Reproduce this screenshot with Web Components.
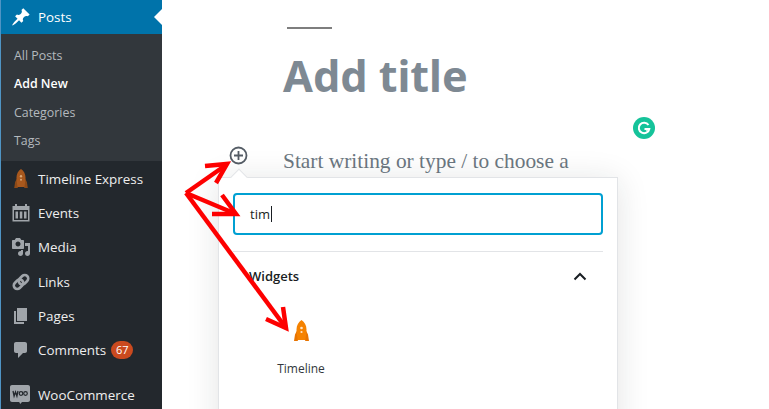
<!DOCTYPE html>
<html>
<head>
<meta charset="utf-8">
<title>Add New Post</title>
<style>
	html, body { margin: 0; height: 100%; overflow: hidden; background: #fff; }
	body { font-family: "Open Sans", "Noto Sans", sans-serif; position: relative; width: 769px; height: 409px; }
	app-shell { height: 409px; }
	svg { display: block; }
</style>
</head>
<body>
<app-shell>
	<wp-sidebar slot="side">
		<wp-menu-item active>
			<svg slot="icon" width="20" height="20" viewBox="0 0 20 20"><path fill="#fff" d="M10.440 3.020l1.820-1.820 6.360 6.350-1.830 1.820c-1.050-.68-2.480-.57-3.410.36l-.75.75c-.92.930-1.040 2.350-.35 3.410l-1.830 1.820-2.410-2.410-2.800 2.790c-.42.420-3.380 2.710-3.800 2.290s1.860-3.390 2.280-3.810l2.790-2.790L4.100 9.360l1.830-1.820c1.050.690 2.480.570 3.400-.36l.75-.75c.930-.920 1.050-2.350.360-3.410z"/></svg>
			Posts
		</wp-menu-item>
		<wp-submenu>
			<wp-sub-item>All Posts</wp-sub-item>
			<wp-sub-item current>Add New</wp-sub-item>
			<wp-sub-item>Categories</wp-sub-item>
			<wp-sub-item>Tags</wp-sub-item>
		</wp-submenu>
		<wp-menu-item>
			<rocket-icon slot="icon" tone="dim"></rocket-icon>
			Timeline Express
		</wp-menu-item>
		<wp-menu-item>
			<svg slot="icon" width="20" height="20" viewBox="0 0 20 20"><path fill="#a0a5aa" fill-rule="evenodd" d="M4 1h2v2h8V1h2v2h2.500v15.500H1.500V3H4zM3 7v10h14V7zM4.500 8.500h2.500V15.500H4.500zm4.300 0h2.500v7H8.800zm4.200 0h2.500v7H13z"/></svg>
			Events
		</wp-menu-item>
		<wp-menu-item>
			<svg slot="icon" width="20" height="20" viewBox="0 0 20 20"><path fill="#a0a5aa" d="M13 11V4c0-.55-.45-1-1-1h-1.670L9 1H5L3.670 3H2c-.55 0-1 .45-1 1v7c0 .55.45 1 1 1h10c.55 0 1-.45 1-1zM7 4.500c1.380 0 2.500 1.120 2.500 2.500S8.380 9.500 7 9.500 4.500 8.380 4.500 7 5.620 4.500 7 4.500zM14 6h5v10.500c0 1.380-1.120 2.500-2.500 2.500S14 17.880 14 16.500s1.120-2.500 2.500-2.500c.17 0 .34.020.5.050V9h-3V6zm-4 8.050V13h2v3.500c0 1.380-1.120 2.500-2.500 2.500S7 17.880 7 16.500 8.120 14 9.500 14c.17 0 .34.020.5.050z"/></svg>
			Media
		</wp-menu-item>
		<wp-menu-item>
			<svg slot="icon" width="20" height="20" viewBox="0 0 20 20"><g fill="none" stroke="#a0a5aa" stroke-width="2.600"><rect x="9" y="2.500" width="7" height="10.500" rx="3.500" transform="rotate(45 12.500 7.750)"/><rect x="4" y="7" width="7" height="10.500" rx="3.500" transform="rotate(45 7.500 12.250)"/></g></svg>
			Links
		</wp-menu-item>
		<wp-menu-item>
			<svg slot="icon" width="20" height="20" viewBox="0 0 20 20"><path fill="#a0a5aa" d="M6 15V2h10v13H6zm-1 1h8v2H3V5h2v11z"/></svg>
			Pages
		</wp-menu-item>
		<wp-menu-item>
			<svg slot="icon" width="20" height="20" viewBox="0 0 20 20"><path fill="#a0a5aa" d="M5 2h9c1.100 0 2 .9 2 2v7c0 1.100-.9 2-2 2h-2l-5 5v-5H5c-1.100 0-2-.9-2-2V4c0-1.100.9-2 2-2z"/></svg>
			Comments
			<count-badge slot="badge">67</count-badge>
		</wp-menu-item>
		<wp-menu-item woo>
			<svg slot="icon" width="20" height="20" viewBox="0 0 20 20"><path fill="#a0a5aa" d="M2 0h16c1.100 0 2 .9 2 2v13c0 1.100-.9 2-2 2h-6l-1.800 2-1-2H2c-1.100 0-2-.9-2-2V2C0 .9.900 0 2 0z"/><path fill="none" stroke="#23282d" stroke-width="1.300" d="M3 6l1.100 5 1.400-4 1.400 4L8 6"/><circle cx="11" cy="8.500" r="1.800" fill="none" stroke="#23282d" stroke-width="1.200"/><circle cx="15.500" cy="8.500" r="1.800" fill="none" stroke="#23282d" stroke-width="1.200"/></svg>
			WooCommerce
		</wp-menu-item>
	</wp-sidebar>
	<editor-canvas slot="main">
		<inserter-popover></inserter-popover>
	</editor-canvas>
</app-shell>
<red-arrows></red-arrows>

<script>
	class AppShell extends HTMLElement {
		constructor() {
			super();
			this.attachShadow({ mode: 'open' });
			this.shadowRoot.innerHTML = `
				<style>
					:host { display: grid; grid-template-columns: 162px 1fr; overflow: hidden; }
				</style>
				<slot name="side"></slot>
				<slot name="main"></slot>
			`;
		}
	}

	class WpSidebar extends HTMLElement {
		constructor() {
			super();
			this.attachShadow({ mode: 'open' });
			this.shadowRoot.innerHTML = `
				<style>
					:host {
						display: flex;
						flex-direction: column;
						height: 409px;
						overflow: hidden;
						background: #23282d;
						box-shadow: inset 1px 0 0 #4f94c4;
					}
				</style>
				<slot></slot>
			`;
		}
	}

	class WpMenuItem extends HTMLElement {
		constructor() {
			super();
			this.attachShadow({ mode: 'open' });
			this.shadowRoot.innerHTML = `
				<style>
					:host {
						display: flex;
						align-items: center;
						height: 34.3px;
						padding-left: 11px;
						gap: 7px;
						color: #eee;
						font-size: 13.4px;
						position: relative;
						flex: none;
					}
					:host([active]) { background: #0073aa; color: #fff; height: 34px; box-shadow: inset 1px 0 0 #4f94c4; }
					:host([active])::after {
						content: "";
						position: absolute;
						right: 0;
						top: 9px;
						border: 8px solid transparent;
						border-right-color: #fff;
						border-left-width: 0;
					}
					:host([woo]) { margin-top: 11px; padding-left: 10px; gap: 8px; }
					.icon { width: 20px; height: 20px; flex: none; }
					.badge { margin-left: -2px; display: flex; }
				</style>
				<span class="icon"><slot name="icon"></slot></span>
				<span><slot></slot></span>
				<span class="badge"><slot name="badge"></slot></span>
			`;
		}
	}

	class WpSubmenu extends HTMLElement {
		constructor() {
			super();
			this.attachShadow({ mode: 'open' });
			this.shadowRoot.innerHTML = `
				<style>
					:host {
						display: flex;
						flex-direction: column;
						flex: none;
						height: 127px;
						margin-bottom: .5px;
						padding-top: 7.200px;
						box-sizing: border-box;
						background: #32373c;
						box-shadow: inset 1px 0 0 #4f94c4;
					}
				</style>
				<slot></slot>
			`;
		}
	}

	class WpSubItem extends HTMLElement {
		constructor() {
			super();
			this.attachShadow({ mode: 'open' });
			this.shadowRoot.innerHTML = `
				<style>
					:host {
						display: flex;
						align-items: center;
						height: 28.400px;
						padding-left: 14px;
						font-size: 12.400px;
						color: #b4b9be;
					}
					:host([current]) { color: #fff; font-weight: 600; }
				</style>
				<slot></slot>
			`;
		}
	}

	class CountBadge extends HTMLElement {
		constructor() {
			super();
			this.attachShadow({ mode: 'open' });
			this.shadowRoot.innerHTML = `
				<style>
					:host {
						display: block;
						min-width: 22px;
						height: 18px;
						line-height: 18px;
						text-align: center;
						border-radius: 9px;
						background: #ca4a1f;
						color: #fff;
						font-size: 11px;
					}
				</style>
				<slot></slot>
			`;
		}
	}

	class RocketIcon extends HTMLElement {
		constructor() {
			super();
			this.attachShadow({ mode: 'open' });
			const dim = this.getAttribute('tone') === 'dim';
			const body = dim ? '#a8581d' : '#f58200';
			const fin = dim ? '#8c4a18' : '#e87400';
			const hole = dim ? '#d8a878' : '#ffe6c8';
			const w = dim ? 14 : 15;
			const h = dim ? 19 : 21;
			this.shadowRoot.innerHTML = `
				<style>:host { display: block; } svg { display: block; margin: auto; }</style>
				<svg width="${w}" height="${h}" viewBox="0 0 15 21">
					<path fill="${fin}" d="M3 10.500L1 14.500 0 21h3.500l1-1.500h6l1 1.500H15l-1-6.500-2-4z"/>
					<path fill="${body}" d="M7.500 0C10.500 2 12.500 5.500 12.500 9.500c0 3.500-.6 7-1.200 10.500H3.700C3.100 16.500 2.500 13 2.500 9.500 2.500 5.500 4.500 2 7.500 0z"/>
					<circle cx="7.500" cy="8" r="1.300" fill="${hole}"/>
					<circle cx="7.500" cy="12" r="1.100" fill="${hole}"/>
				</svg>
			`;
		}
	}

	class EditorCanvas extends HTMLElement {
		constructor() {
			super();
			this.attachShadow({ mode: 'open' });
			this.shadowRoot.innerHTML = `
				<style>
					:host {
						display: block;
						height: 409px;
						overflow: hidden;
						position: relative;
						background: #fff;
					}
					.rule { width: 45px; height: 2px; background: #7e7e7e; margin: 27px 0 0 125px; }
					h1 {
						margin: 13px 0 0 121px;
						font: 700 43.200px/68px "Noto Sans", "Open Sans", sans-serif;
						color: #7e8993;
					}
					.block { display: flex; align-items: center; margin: 37px 0 0 67px; height: 28px; gap: 35px; }
					.plus { width: 19px; height: 19px; flex: none; margin-top: -12px; }
					p {
						margin: 0;
						font: 21.400px/28px "Liberation Serif", serif;
						color: #6c7781;
						white-space: nowrap;
					}
					.grammarly {
						position: absolute;
						left: 471px;
						top: 117px;
						width: 22px;
						height: 22px;
					}
				</style>
				<div class="rule"></div>
				<h1>Add title</h1>
				<div class="block">
					<svg class="plus" viewBox="0 0 19 19">
						<circle cx="9.500" cy="9.500" r="8" fill="none" stroke="#555d66" stroke-width="1.800"/>
						<path d="M5 9.500h9M9.500 5v9" stroke="#555d66" stroke-width="1.800" fill="none"/>
					</svg>
					<p>Start writing or type / to choose a</p>
				</div>
				<svg class="grammarly" viewBox="0 0 22 22">
					<circle cx="11" cy="11" r="11" fill="#15c39a"/>
					<path d="M15.500 8a5.300 5.300 0 1 0 .8 4H11.500" fill="none" stroke="#fff" stroke-width="2"/>
					<path d="M11.500 12l3 2.500v-2.500z" fill="#fff"/>
				</svg>
				<slot></slot>
			`;
		}
	}

	class InserterPopover extends HTMLElement {
		constructor() {
			super();
			this.attachShadow({ mode: 'open' });
			this.shadowRoot.innerHTML = `
				<style>
					:host {
						position: absolute;
						left: 56px;
						top: 177px;
						width: 400px;
						height: 260px;
						box-sizing: border-box;
						background: #fff;
						border: 1px solid #e2e4e7;
						box-shadow: 0 3px 30px rgba(25, 30, 35, .12);
						padding: 15px 14px 0;
						font-family: "Open Sans", "Noto Sans", sans-serif;
						color: #191e23;
					}
					:host::before {
						content: "";
						position: absolute;
						left: 14px;
						top: -7px;
						width: 11px;
						height: 11px;
						background: #fff;
						border: 1px solid #e2e4e7;
						border-width: 1px 0 0 1px;
						transform: rotate(45deg);
					}
					.search {
						height: 42px;
						box-sizing: border-box;
						border: 2px solid #00a0d2;
						border-radius: 4px;
						display: flex;
						align-items: center;
						padding-left: 15px;
						font-size: 13px;
					}
					.caret { width: 1px; height: 16px; background: #191e23; margin-left: 1px; }
					hr { border: 0; border-top: 1px solid #e2e4e7; margin: 16px 0 0; }
					.head {
						display: flex;
						align-items: center;
						justify-content: space-between;
						height: 48px;
						padding: 0 16px;
						font-size: 13px;
						font-weight: 600;
					}
					.item {
						width: 104px;
						margin: 20px 0 0 16px;
						display: flex;
						flex-direction: column;
						align-items: center;
						font-size: 12px;
						color: #32373c;
					}
					.item rocket-icon { width: 15px; height: 21px; }
					.item span { margin-top: 19px; }
				</style>
				<div class="search"><span>tim</span><span class="caret"></span></div>
				<hr>
				<div class="head">
					<span>Widgets</span>
					<svg width="14" height="9" viewBox="0 0 14 9"><path d="M1.500 7.500L7 2l5.500 5.500" fill="none" stroke="#191e23" stroke-width="2"/></svg>
				</div>
				<div class="item"><rocket-icon></rocket-icon><span>Timeline</span></div>
			`;
		}
	}

	class RedArrows extends HTMLElement {
		constructor() {
			super();
			this.attachShadow({ mode: 'open' });
			this.shadowRoot.innerHTML = `
				<style>
					:host { position: absolute; left: 0; top: 0; width: 769px; height: 409px; pointer-events: none; }
				</style>
				<svg width="769" height="409" viewBox="0 0 769 409" style="display:block">
					<g fill="none" stroke="#fd0000" stroke-width="4.500" stroke-linejoin="miter">
						<path d="M186 193L226 165"/>
						<path d="M205 166L227 164L216 183"/>
						<path d="M186 193L236 214"/>
						<path d="M222 195L236 214L212 214"/>
						<path d="M186 193L286 328"/>
						<path d="M283 307L286 328L266 319"/>
					</g>
				</svg>
			`;
		}
	}

	customElements.define('app-shell', AppShell);
	customElements.define('wp-sidebar', WpSidebar);
	customElements.define('wp-menu-item', WpMenuItem);
	customElements.define('wp-submenu', WpSubmenu);
	customElements.define('wp-sub-item', WpSubItem);
	customElements.define('count-badge', CountBadge);
	customElements.define('rocket-icon', RocketIcon);
	customElements.define('editor-canvas', EditorCanvas);
	customElements.define('inserter-popover', InserterPopover);
	customElements.define('red-arrows', RedArrows);
</script>
</body>
</html>
